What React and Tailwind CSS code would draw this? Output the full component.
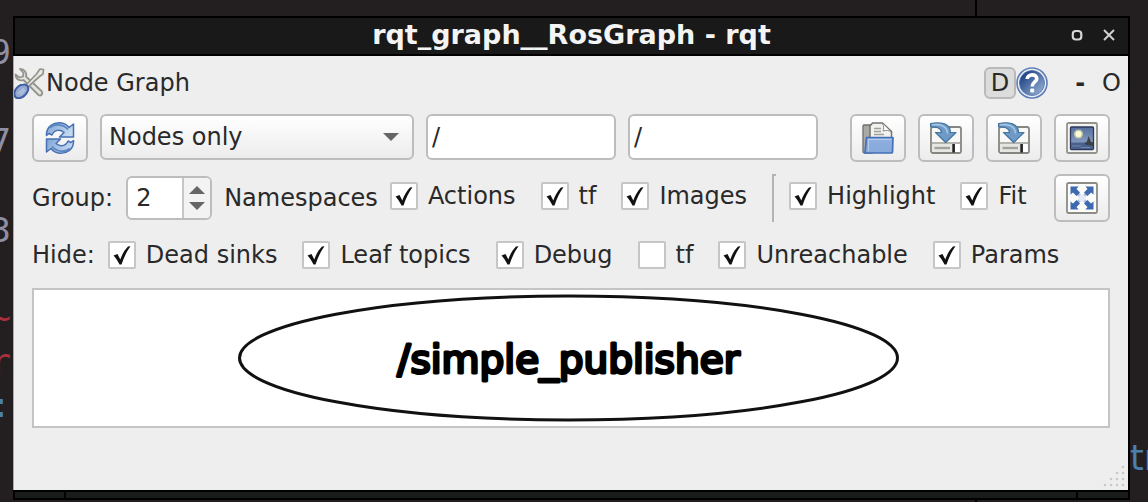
import React from "react";

function RefreshIcon() {
  return (
    <svg viewBox="0 0 32 32" className="size-8" aria-hidden="true">
      <defs>
        <linearGradient id="arrowBlue" x1="0" y1="0" x2="1" y2="0.4">
          <stop offset="0" stopColor="#7fa3d4" />
          <stop offset="1" stopColor="#c3d8f0" />
        </linearGradient>
      </defs>
      <g fill="url(#arrowBlue)" stroke="#4672b4" strokeWidth="1.500" strokeLinejoin="round">
        <path d="M2.500 13.500C2 4.500 9.500 0.500 16 0.800C20 1 23 2.800 25 5.500L29.500 2V15H15.500L20 10.500C16 7 10.500 7.500 8 13L5 11.500Z" />
        <path d="M29.500 18.500C30 27.500 22.500 31.500 16 31.200C12 31 9 29.200 7 26.500L2.500 30V17H16.500L12 21.500C16 25 21.500 24.500 24 19L27 20.500Z" />
      </g>
      <path d="M6 5.500C10 1.800 19 1.500 24 7.500" fill="none" stroke="#5a86c3" strokeWidth="1.800" />
      <path d="M26 26.500C22 30.200 13 30.500 8 24.500" fill="none" stroke="#5a86c3" strokeWidth="1.800" />
    </svg>
  );
}

function ToolsIcon() {
  return (
    <svg viewBox="0 0 32 32" className="size-8" aria-hidden="true">
      <path
        d="M6 2C10.500 2 13 5.500 12 9.500L27.500 24C29.500 27 27 29.500 24.500 28L9.500 13C5.500 14.500 1.500 12 1.500 7.500L5.500 10.500L9 9.500L9.500 6Z"
        fill="#e3e3df" stroke="#94948d" strokeWidth="1.800" strokeLinejoin="round"
      />
      <path d="M26 2L29.500 2.500L29 7L25.500 9.500L14 20L12 18L22.500 7Z" fill="#e8e8e4" stroke="#94948d" strokeWidth="1.700" strokeLinejoin="round" />
      <path d="M9.500 17.500C13 17 15 20 14 23.500C12.500 28 8 31.500 4 31.200C0.500 31 -0.500 27 1 23.500C2.500 20.500 6 17.800 9.500 17.500Z" fill="#93a9cf" stroke="#3d5da3" strokeWidth="2" />
      <path d="M4 26.500L10 21.500M6 28L11 23" stroke="#b9c8e2" strokeWidth="1.200" />
    </svg>
  );
}

function HelpIcon() {
  return (
    <svg viewBox="0 0 32 32" className="size-8" aria-hidden="true">
      <defs>
        <linearGradient id="helpBlue" x1="0" y1="0" x2="1" y2="1">
          <stop offset="0.2" stopColor="#274a86" />
          <stop offset="1" stopColor="#a3bbdf" />
        </linearGradient>
      </defs>
      <circle cx="16" cy="16" r="15" fill="#eef2f8" stroke="#5d7db4" strokeWidth="1.600" />
      <circle cx="16" cy="16" r="12.500" fill="url(#helpBlue)" stroke="#4a6ca8" strokeWidth="0.800" />
      <path d="M11.200 12C11.500 6.500 20.800 6.500 20.800 11.700C20.800 15 16.200 15 16.200 19.500" fill="none" stroke="#fff" strokeWidth="3.600" />
      <rect x="14.200" y="21.500" width="4" height="4" rx="1" fill="#fff" />
    </svg>
  );
}

function FolderIcon() {
  return (
    <svg viewBox="0 0 32 32" className="size-8" aria-hidden="true">
      <defs>
        <linearGradient id="folderBlue" x1="0" y1="0" x2="0" y2="1">
          <stop offset="0" stopColor="#8fb0df" />
          <stop offset="1" stopColor="#86a9dc" />
        </linearGradient>
      </defs>
      <path d="M1 4Q1 3 2 3H10V31H2.500Q1 31 1 29.500Z" fill="#a9a9a6" stroke="#6f6f6b" strokeWidth="1.300" />
      <path d="M8 18V4L10.500 1H20.500L29.500 9.500V18Z" fill="#f1f1ef" stroke="#73736e" strokeWidth="1.500" strokeLinejoin="round" />
      <path d="M20.500 1.500C22 4 22 7 21 9C24 8 27 8 29 10" fill="#fff" stroke="#8c8c87" strokeWidth="1" />
      <path d="M12 6.500H19M12 9.500H19M12 12.500H22" stroke="#a0a09c" strokeWidth="1.400" />
      <path d="M4.500 15.500H31L30.500 30Q30.500 31 29.500 31H3Z" fill="url(#folderBlue)" stroke="#4470b8" strokeWidth="1.700" strokeLinejoin="round" />
      <path d="M6.500 29V17.500H29" fill="none" stroke="#b7cdec" strokeWidth="1" />
    </svg>
  );
}

function SaveIcon() {
  return (
    <svg viewBox="0 0 32 32" className="size-8" aria-hidden="true">
      <rect x="1" y="5" width="30" height="26" rx="2" fill="#f8f8f7" stroke="#868681" strokeWidth="1.800" />
      <path d="M2 21H30" stroke="#95958f" strokeWidth="1.400" />
      <rect x="2" y="22" width="28" height="8" fill="#e6e6e3" />
      <path d="M4.500 26H20" stroke="#a2a29d" strokeWidth="2.400" />
      <rect x="22.300" y="22" width="2.600" height="8.500" fill="#222" />
      <rect x="25.200" y="22" width="4.500" height="8" fill="#fff" />
      <path d="M0.500 1.500C11 -0.500 20.500 1.500 20.500 10.500H26L15.700 20.500L5.500 10.500H11.500C11.500 6.500 7 4.500 0.500 5Z" fill="#6d9ac6" stroke="#44749f" strokeWidth="1.200" strokeLinejoin="round" />
      <path d="M2 3C10 1.800 17 3.500 17.500 11.500" fill="none" stroke="#a5c5e2" strokeWidth="1.600" />
    </svg>
  );
}

function ImageIcon() {
  return (
    <svg viewBox="0 0 32 32" className="size-8" aria-hidden="true">
      <defs>
        <linearGradient id="sky" x1="0" y1="0" x2="0" y2="1">
          <stop offset="0" stopColor="#55709f" />
          <stop offset="1" stopColor="#9aabca" />
        </linearGradient>
      </defs>
      <rect x="1" y="1" width="30" height="30" rx="1.500" fill="#f2f2f0" stroke="#93938c" strokeWidth="1.800" />
      <rect x="4.500" y="5" width="23" height="22.500" rx="1" fill="url(#sky)" stroke="#2b385a" strokeWidth="1.300" />
      <path d="M5 20.500H27V27H5Z" fill="#4a618d" />
      <path d="M18.500 21.500L21 19.500L22.500 14L25 20L27 20.500V24L19 22.500Z" fill="#3c4047" />
      <path d="M6 24H15M15 25.500H24" stroke="#6d86ae" strokeWidth="1" />
      <circle cx="12.500" cy="12" r="4.500" fill="#e9e7a5" opacity="0.700" />
      <circle cx="12.500" cy="12" r="3" fill="#fffdd8" />
    </svg>
  );
}

function FitIcon() {
  return (
    <svg viewBox="0 0 32 32" className="size-8" aria-hidden="true">
      <rect x="1" y="1" width="30" height="30" rx="1.500" fill="#fbfbfa" stroke="#8c8c85" strokeWidth="1.800" />
      <path d="M8 8L24 24M24 8L8 24" stroke="#a9bfdf" strokeWidth="3" />
      <g fill="#3c69b0">
        <path d="M4.500 4.500H12.500L10.500 7L14 10.500L10.500 14L7 10.500L4.500 12.500Z" />
        <path d="M27.500 4.500V12.500L25 10.500L21.500 14L18 10.500L21.500 7L19.500 4.500Z" />
        <path d="M27.500 27.500H19.500L21.500 25L18 21.500L21.500 18L25 21.500L27.500 19.500Z" />
        <path d="M4.500 27.500V19.500L7 21.500L10.500 18L14 21.500L10.500 25L12.500 27.500Z" />
      </g>
      <circle cx="16" cy="16" r="3.500" fill="#e3eaf5" />
    </svg>
  );
}

function IconButton({ label, className = "", children }) {
  return (
    <button
      type="button"
      aria-label={label}
      className={`flex h-12 w-14 shrink-0 items-center justify-center rounded-md border-2 border-[#bdbdbd] bg-linear-to-b from-white to-[#ececec] ${className}`}
    >
      {children}
    </button>
  );
}

function Check({ label, defaultChecked = true }) {
  return (
    <label className="flex items-center gap-[10px] whitespace-nowrap">
      <span className="grid size-7 shrink-0">
        <input
          type="checkbox"
          defaultChecked={defaultChecked}
          className="peer col-start-1 row-start-1 size-7 appearance-none rounded-xs border-2 border-[#c6c6c6] bg-white"
        />
        <svg viewBox="0 0 28 28" className="pointer-events-none invisible col-start-1 row-start-1 size-7 peer-checked:visible" aria-hidden="true">
          <path d="M5.500 14.500L9.500 13L12.300 18.500C14.500 12.500 17 8.500 20 5.500L22.500 5.300C19 10 16 16 13.500 23.500H11.500C9.500 19.500 7.500 16.500 5.500 14.500Z" fill="#111" />
        </svg>
      </span>
      {label}
    </label>
  );
}

function TitleBar() {
  return (
    <header className="grid h-10 shrink-0 grid-cols-[1fr_auto_1fr] items-start border-2 border-black bg-[#191919]">
      <h1 className="col-start-2 text-[27px] leading-[34px] font-bold whitespace-nowrap text-[#f4f4f4]">rqt_graph__RosGraph - rqt</h1>
      <div className="flex h-[34px] items-center justify-end gap-4 pr-[11px]">
        <button type="button" aria-label="Maximize" className="flex size-4 items-center justify-center">
          <svg viewBox="0 0 16 16" className="size-4"><rect x="3.800" y="4" width="8.500" height="8.500" rx="3" fill="none" stroke="#d6d6d6" strokeWidth="2.200" /></svg>
        </button>
        <button type="button" aria-label="Close" className="flex size-4 items-center justify-center">
          <svg viewBox="0 0 16 16" className="size-4"><path d="M3 3L13 13M13 3L3 13" stroke="#cfcfcf" strokeWidth="2" /></svg>
        </button>
      </div>
    </header>
  );
}

function PanelHeader() {
  return (
    <div className="flex h-[54px] items-center pr-[7px]">
      <ToolsIcon />
      <h2 className="flex-1">Node Graph</h2>
      <button type="button" className="flex size-8 items-center justify-center rounded-md border-2 border-[#b9b9b9] bg-[#dcdcdc]">D</button>
      <button type="button" aria-label="Help"><HelpIcon /></button>
      <button type="button" aria-label="Minimize panel" className="w-16 text-center font-bold">-</button>
      <button type="button" aria-label="Float panel" className="-ml-2.5">O</button>
    </div>
  );
}

function GraphToolbar() {
  const field = "h-[46px] w-[190px] min-w-0 rounded-md border-2 border-[#bdbdbd] bg-white px-1 outline-none";
  return (
    <div className="flex items-start gap-3">
      <IconButton label="Refresh"><RefreshIcon /></IconButton>
      <span className="grid flex-1 items-center">
        <select aria-label="Graph type" className="col-start-1 row-start-1 h-[46px] w-full appearance-none rounded-md border-2 border-[#bdbdbd] bg-linear-to-b from-white to-[#ececec] px-[7px]">
          <option>Nodes only</option>
          <option>Nodes/Topics (active)</option>
          <option>Nodes/Topics (all)</option>
        </select>
        <svg viewBox="0 0 16 8" className="pointer-events-none col-start-1 row-start-1 mr-[15px] h-2 w-4 justify-self-end" aria-hidden="true">
          <path d="M0 0H16L8 8Z" fill="#666" />
        </svg>
      </span>
      <input type="text" aria-label="Namespace filter" defaultValue="/" className={field} />
      <input type="text" aria-label="Topic filter" defaultValue="/" className={field} />
      <div className="ml-5 flex gap-3">
        <IconButton label="Load DOT graph"><FolderIcon /></IconButton>
        <IconButton label="Save as DOT graph"><SaveIcon /></IconButton>
        <IconButton label="Save as SVG"><SaveIcon /></IconButton>
        <IconButton label="Save as image"><ImageIcon /></IconButton>
      </div>
    </div>
  );
}

function GroupRow() {
  return (
    <div className="mt-3 flex items-center">
      <label htmlFor="group-depth">Group:</label>
      <div className="ml-[13px] flex h-11 w-[86px] shrink-0 overflow-hidden rounded-md border-2 border-[#bdbdbd] bg-white">
        <input id="group-depth" type="text" inputMode="numeric" defaultValue="2" className="w-0 flex-1 px-2 outline-none" />
        <div className="flex w-7 flex-col border-l-2 border-[#c6c6c6] bg-[#f3f3f3]">
          <button type="button" aria-label="Increase" className="flex flex-1 items-end justify-center pb-1">
            <svg viewBox="0 0 16 8" className="h-2 w-4"><path d="M0 8H16L8 0Z" fill="#666" /></svg>
          </button>
          <button type="button" aria-label="Decrease" className="flex flex-1 items-start justify-center pt-1">
            <svg viewBox="0 0 16 8" className="h-2 w-4"><path d="M0 0H16L8 8Z" fill="#666" /></svg>
          </button>
        </div>
      </div>
      <span className="ml-3">Namespaces</span>
      <div className="ml-3 flex h-11 items-center gap-[25px] self-start">
        <Check label="Actions" />
        <Check label="tf" />
        <Check label="Images" />
      </div>
      <div className="ml-[25px] h-12 w-1 border-t-2 border-l-2 border-[#b4b4b4]" />
      <div className="ml-[13px] flex h-11 items-center gap-[25px] self-start">
        <Check label="Highlight" />
        <Check label="Fit" />
      </div>
      <IconButton label="Fit in view" className="ml-auto"><FitIcon /></IconButton>
    </div>
  );
}

function HideRow() {
  return (
    <div className="mt-[18px] flex items-center gap-[13px]">
      <span>Hide:</span>
      <div className="flex items-center gap-[25px]">
        <Check label="Dead sinks" />
        <Check label="Leaf topics" />
        <Check label="Debug" />
        <Check label="tf" defaultChecked={false} />
        <Check label="Unreachable" />
        <Check label="Params" />
      </div>
    </div>
  );
}

function GraphView() {
  return (
    <div className="mt-[18px] h-[140px] border-2 border-[#c4c4c4] bg-white">
      <svg viewBox="0 0 1074 136" className="size-full" role="img" aria-label="ROS node graph">
        <ellipse cx="534.500" cy="68" rx="329" ry="62" fill="none" stroke="#111" strokeWidth="3" />
        <text x="534.500" y="83" textAnchor="middle" fontSize="39" fill="#000" stroke="#000" strokeWidth="3" strokeLinejoin="round">
          /simple_publisher
        </text>
      </svg>
    </div>
  );
}

function SizeGrip() {
  return (
    <svg viewBox="0 0 24 24" className="mt-auto mr-0.5 mb-0.5 size-6 self-end" aria-hidden="true">
      <g fill="#c9c9c9">
        <circle cx="21" cy="3" r="1.300" />
        <circle cx="15" cy="9" r="1.300" /><circle cx="21" cy="9" r="1.300" />
        <circle cx="9" cy="15" r="1.300" /><circle cx="15" cy="15" r="1.300" /><circle cx="21" cy="15" r="1.300" />
        <circle cx="3" cy="21" r="1.300" /><circle cx="9" cy="21" r="1.300" /><circle cx="15" cy="21" r="1.300" /><circle cx="21" cy="21" r="1.300" />
      </g>
    </svg>
  );
}

function LeftBackdrop() {
  return (
    <div className="flex w-[13px] shrink-0 flex-col items-end overflow-hidden pt-2 pr-0.5 font-['DejaVu_Sans_Mono',monospace] text-[34px] text-[#8f8fa3]">
      <span className="leading-[89px]">9</span>
      <span className="leading-[89px]">7</span>
      <span className="leading-[89px]">3</span>
      <span className="mt-5 leading-[44px] text-[#a8303c]">~</span>
      <span className="leading-[44px] text-[#a8303c]">r</span>
      <span className="leading-[44px] text-[#4a80ad]">:</span>
    </div>
  );
}

export default function App() {
  return (
    <div className="flex min-h-screen overflow-hidden bg-[#231f20] font-['DejaVu_Sans',sans-serif] text-[24px] leading-[30px] text-[#292929]">
      <LeftBackdrop />
      <div className="flex min-w-0 flex-1 flex-col">
        <div className="mr-[153px] h-4 w-0.5 shrink-0 self-end bg-black" />
        <TitleBar />
        <main className="flex flex-1 flex-col border-r-2 border-l border-r-black border-l-[#aaa] bg-[#eee]">
          <PanelHeader />
          <div className="px-[18px] pt-1">
            <GraphToolbar />
            <GroupRow />
            <HideRow />
            <GraphView />
          </div>
          <SizeGrip />
        </main>
        <div className="flex h-2.5 shrink-0 justify-between border-2 border-black bg-[#1a1b1b] pr-[50px] pl-[49px]">
          <span className="w-0.5 bg-black" />
          <span className="w-0.5 bg-black" />
        </div>
        <div className="mr-[153px] h-0.5 w-0.5 shrink-0 self-end bg-black" />
      </div>
      <div className="flex w-[18px] shrink-0 flex-col justify-end overflow-hidden pb-[22px] text-[35px] leading-[44px] text-[#4a80ad]">
        tr
      </div>
    </div>
  );
}
